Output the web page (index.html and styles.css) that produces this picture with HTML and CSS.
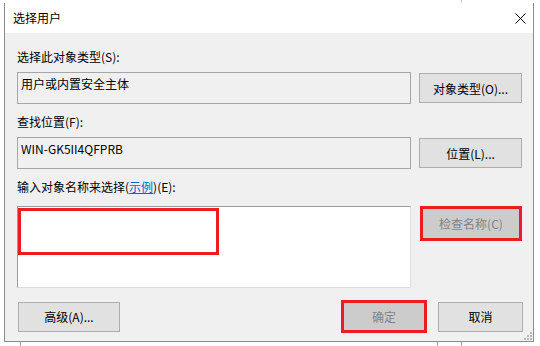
FILE: index.html
```html
<!DOCTYPE html>
<html lang="zh-CN">
<head>
    <meta charset="UTF-8">
    <title>选择用户</title>
    <link rel="stylesheet" href="styles.css">
</head>
<body>
    <div class="desktop">
        <span class="bg-line bg-line-a"></span>
        <span class="bg-line bg-line-b"></span>
        <span class="bg-line bg-line-c"></span>
        <span class="bg-line bg-line-top"></span>

        <div class="dialog">
            <div class="titlebar">
                <span class="title">选择用户</span>
                <svg class="close" width="11" height="11" viewBox="0 0 11 11">
                    <path d="M0.5 0.5 L10.5 10.5 M10.5 0.5 L0.5 10.5" stroke="#000" stroke-width="1" fill="none"/>
                </svg>
            </div>

            <div class="dialog-body">
                <label class="caption">选择此对象类型(S):</label>
                <div class="row">
                    <div class="field">用户或内置安全主体</div>
                    <button class="btn">对象类型(O)...</button>
                </div>

                <label class="caption caption-gap">查找位置(F):</label>
                <div class="row">
                    <div class="field">WIN-GK5II4QFPRB</div>
                    <button class="btn">位置(L)...</button>
                </div>

                <label class="caption caption-gap3">输入对象名称来选择(<a class="link" href="#">示例</a>)(E):</label>
                <div class="row row-top">
                    <div class="names">
                        <div class="mark"></div>
                    </div>
                    <button class="btn btn-disabled btn-marked">检查名称(C)</button>
                </div>

                <div class="footer">
                    <button class="btn btn-adv">高级(A)...</button>
                    <div class="footer-right">
                        <button class="btn btn-disabled btn-marked btn-ok">确定</button>
                        <button class="btn btn-cancel">取消</button>
                    </div>
                </div>
            </div>

            <svg class="grip" width="8" height="8" viewBox="0 0 8 8">
                <rect x="6" y="0" width="2" height="2" fill="#b8b8b8"/>
                <rect x="3" y="3" width="2" height="2" fill="#b8b8b8"/>
                <rect x="6" y="3" width="2" height="2" fill="#b8b8b8"/>
                <rect x="0" y="6" width="2" height="2" fill="#b8b8b8"/>
                <rect x="3" y="6" width="2" height="2" fill="#b8b8b8"/>
                <rect x="6" y="6" width="2" height="2" fill="#b8b8b8"/>
            </svg>
        </div>
    </div>
</body>
</html>
```

FILE: styles.css
```css
* {
	box-sizing: border-box;
}
body {
	margin: 0;
	background: #fff;
	font-family: "Noto Sans CJK SC", "Noto Sans", sans-serif;
	font-size: 12px;
	color: #000;
}
.desktop {
	position: relative;
	width: 540px;
	height: 346px;
	overflow: hidden;
	padding: 3px 0 0 4px;
}
.bg-line {
	position: absolute;
	width: 1px;
	background: #a0a0a0;
}
.bg-line-a {
	left: 20px;
	top: 341px;
	height: 5px;
}
.bg-line-b {
	left: 437px;
	top: 341px;
	height: 5px;
}
.bg-line-c {
	left: 461px;
	top: 341px;
	height: 5px;
}
.bg-line-top {
	left: 461px;
	top: 0;
	height: 3px;
	background: #d0d0d0;
}

.dialog {
	position: relative;
	width: 530px;
	height: 339px;
	background: #f0f0f0;
	border: 1px solid #8c8c8c;
	border-top: none;
}
.titlebar {
	height: 30px;
	background: #fff;
	display: flex;
	align-items: center;
	justify-content: space-between;
	padding: 0 8px 0 8px;
}
.title {
	line-height: 16px;
}
.close {
	display: block;
	margin-right: -1px;
}

.dialog-body {
	padding: 16px 10px 0 12px;
}
.caption {
	display: block;
	line-height: 16px;
	margin-bottom: 7px;
}
.caption-gap {
	margin-top: 10px;
}
.caption-gap3 {
	margin-top: 10px;
	margin-bottom: 11px;
}
.link {
	color: #0066cc;
	text-decoration: underline;
}
.row {
	display: grid;
	grid-template-columns: 394px 103px;
	column-gap: 8px;
	align-items: center;
}
.row-top {
	align-items: start;
}
.field {
	height: 32px;
	border: 1px solid #a6a6a6;
	padding: 3px 3px;
	line-height: 16px;
	white-space: nowrap;
}
.btn {
	height: 30px;
	border: 1px solid #adadad;
	background: #e1e1e1;
	font-family: inherit;
	font-size: 12px;
	color: #000;
	padding: 0;
	margin: 0;
}
.btn-disabled {
	background: #cccccc;
	color: #838383;
}
.btn-marked {
	border: 3px solid #ed1c24;
}
.row-top .btn-marked {
	height: 35px;
	margin-left: 1px;
}

.names {
	height: 82px;
	background: #fff;
	border: 1px solid #dcdcdc;
	border-top-color: #9a9a9a;
	border-left-color: #9a9a9a;
	padding-top: 1px;
}
.mark {
	width: 201px;
	height: 47px;
	border: 3px solid #ed1c24;
}

.footer {
	display: flex;
	justify-content: space-between;
	align-items: center;
	margin-top: 12px;
}
.btn-adv {
	width: 102px;
	margin-left: 1px;
}
.footer-right {
	display: flex;
	align-items: center;
	gap: 11px;
}
.btn-ok {
	width: 86px;
	height: 33px;
}
.btn-cancel {
	width: 85px;
}

.grip {
	position: absolute;
	right: 1px;
	bottom: 1px;
}
```
